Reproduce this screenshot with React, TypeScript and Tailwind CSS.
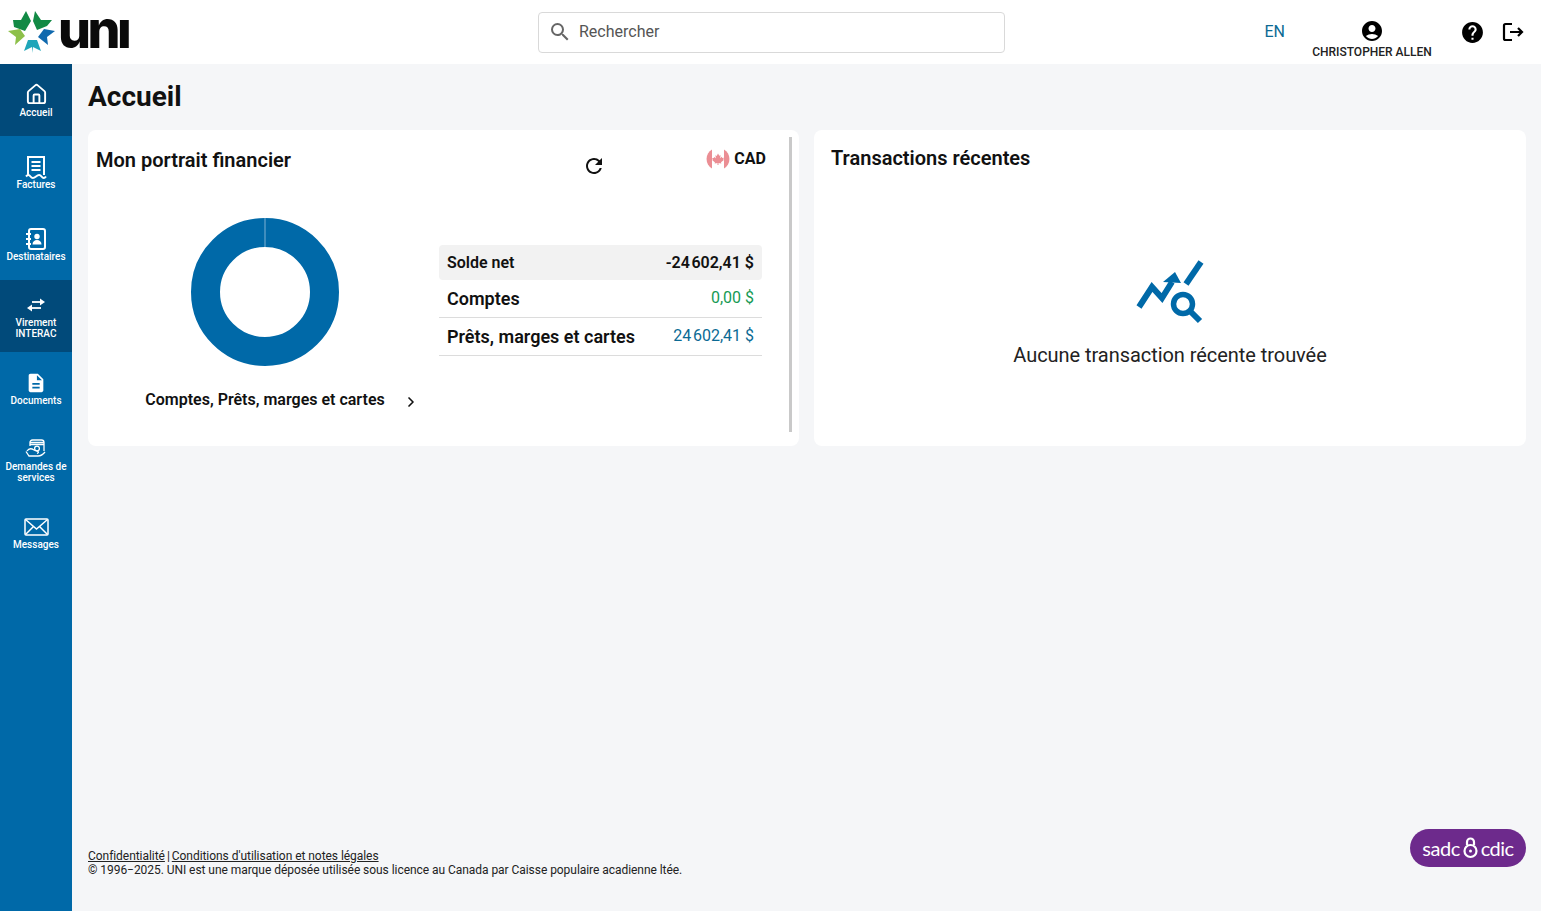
import { ChevronRight, House } from "lucide-react";
import { MdAccountCircle, MdDescription, MdHelp, MdRefresh, MdSearch } from "react-icons/md";
import type { ReactNode } from "react";

function FacturesIcon() {
  return (
    <svg width="22" height="24" viewBox="0 0 22 24" fill="none" stroke="white" strokeWidth="2">
      <path d="M3 20V2h16v18" />
      <path d="M1 21.500c1.700-2 3-2 4.500 0s3 2 5.500 0 4-2 5.500 0 3 2 4.500 0" strokeWidth="2" />
      <path d="M6.500 7h9M6.500 11h9M6.500 15h9" strokeWidth="1.800" />
    </svg>
  );
}

function DestinatairesIcon() {
  return (
    <svg width="22" height="24" viewBox="0 0 22 24" fill="none">
      <rect x="4" y="2" width="16" height="20" rx="2" stroke="white" strokeWidth="2" />
      <path d="M1 7h5M1 12h5M1 17h5" stroke="white" strokeWidth="1.800" />
      <circle cx="12" cy="9.500" r="2.700" fill="white" />
      <path d="M7.500 17.500c0-3 2-4.500 4.500-4.500s4.500 1.500 4.500 4.500z" fill="white" />
    </svg>
  );
}

function VirementIcon() {
  return (
    <svg width="20" height="16" viewBox="0 0 20 16" fill="none" stroke="white" strokeWidth="1.800">
      <path d="M6 5h10" />
      <path d="M14 1.500 19 5l-5 3.500z" fill="white" stroke="none" />
      <path d="M15 11H4" />
      <path d="M6 7.500 1 11l5 3.500z" fill="white" stroke="none" />
    </svg>
  );
}

function DemandesIcon() {
  return (
    <svg width="22" height="20" viewBox="0 0 22 20" fill="none" stroke="white" strokeWidth="1.300">
      <path d="M5 7V3.500C5 2 6 1 7.500 1h9C18 1 19 2 19 3.500V12" />
      <path d="M5 3.500h14M5 5.500h14" />
      <circle cx="12" cy="9.500" r="2.400" />
      <path d="M2 12c2-3 4-3 7-1l4 1.500c1 .7 0 2-1 1.700" />
      <path d="M1 12.500 4 17h9c3 0 5-1.500 7-4" />
    </svg>
  );
}

function MessagesIcon() {
  return (
    <svg width="25" height="18" viewBox="0 0 25 18" fill="none" stroke="white" strokeWidth="1.500">
      <rect x="1" y="1" width="23" height="16" rx="1" />
      <path d="m1.500 1.500 11 9.500 11-9.500M1.500 16.500l8-8M23.500 16.500l-8-8" />
    </svg>
  );
}

function LogoutIcon() {
  return (
    <svg width="22" height="20" viewBox="0 0 22 20" fill="none" stroke="#000" strokeWidth="2.200" className="ml-[17px]">
      <path d="M10 2H3.500A1.500 1.500 0 0 0 2 3.500v13A1.500 1.500 0 0 0 3.500 18H10" />
      <path d="M8 10h12M16 6l4 4-4 4" />
    </svg>
  );
}

function StarLogo() {
  return (
    <svg width="48" height="44" viewBox="8 10 48 44">
      <polygon points="26,11 31,21 25,31 14,27 13,20 21,20" fill="#128a45" />
      <polygon points="35,11 33,21 37,30 47,26 52,20 41,20" fill="#128a45" />
      <polygon points="55,31 44,29 38,37 48,45 47,37" fill="#1069ae" />
      <polygon points="8,31 20,29 25,36 15,45 16,37" fill="#8ec04a" />
      <polygon points="24,51 28,40 37,40 41,51 33,47 33,53 32,47" fill="#1fa6b9" />
    </svg>
  );
}

function CanadaFlag() {
  return (
    <svg width="24" height="24" viewBox="0 0 24 24" className="opacity-50">
      <path d="M6 2.500a11 11 0 0 0 0 19z" fill="#d8202c" />
      <path d="M18 2.500a11 11 0 0 1 0 19z" fill="#d8202c" />
      <path
        d="M12 6.500l1.300 2.300 1.300-.6-.5 3 1.700-1.400.5 1.200 1.500-.2-.5 1.800.6.400-2.900 2.300.3 1.100-2.800-.4V18h-1v-1.900l-2.800.4.300-1.100-2.900-2.300.6-.4-.5-1.800 1.500.2.500-1.200 1.700 1.400-.5-3 1.300.6z"
        fill="#d8202c"
      />
    </svg>
  );
}

function Donut() {
  return (
    <svg width="150" height="150" viewBox="0 0 150 150">
      <circle cx="75" cy="75" r="59.500" fill="none" stroke="#0069a8" strokeWidth="29" />
      <path d="M75 1v29" stroke="#7fb2d3" strokeWidth="1" />
    </svg>
  );
}

function NoDataIcon() {
  return (
    <svg width="68" height="64" viewBox="0 0 68 64" fill="none" stroke="#0069a8">
      <path d="M3 47 16 27l10 11 10-16" strokeWidth="6" />
      <path d="m39 12-12 10 18 1z" fill="#0069a8" stroke="none" />
      <path d="M50 24 65 2" strokeWidth="6" />
      <circle cx="47" cy="44" r="9.500" strokeWidth="5.500" />
      <path d="m54 51 10 10" strokeWidth="6" />
    </svg>
  );
}

const navItems: { label: ReactNode; icon: ReactNode; dark?: boolean }[] = [
  { label: "Accueil", icon: <House size={23} strokeWidth={2} color="white" />, dark: true },
  { label: "Factures", icon: <FacturesIcon /> },
  { label: "Destinataires", icon: <DestinatairesIcon /> },
  {
    label: (
      <>
        Virement
        <br />
        INTERAC
      </>
    ),
    icon: <VirementIcon />,
    dark: true,
  },
  { label: "Documents", icon: <MdDescription size={22} color="white" /> },
  {
    label: (
      <>
        Demandes de
        <br />
        services
      </>
    ),
    icon: <DemandesIcon />,
  },
  { label: "Messages", icon: <MessagesIcon /> },
];

export default function App() {
  return (
    <div className="flex h-[911px] flex-col overflow-hidden bg-[#f5f6f8] font-['Roboto',sans-serif] text-[#111]">
      <header className="flex h-[64px] shrink-0 items-center bg-white">
        <div className="flex w-[538px] shrink-0 items-center pl-2">
          <StarLogo />
          <span className="ml-[2px] -mt-[5px] pr-[4px] font-['Inter',sans-serif] text-[52px] leading-[60px] font-extrabold tracking-[-3.500px] text-[#0a0a0a]">
            unı
          </span>
        </div>
        <div className="flex h-[41px] w-[467px] items-center rounded border border-[#d9d9d9] pl-[9px]">
          <MdSearch size={24} color="#666" />
          <span className="ml-[7px] text-base text-[#555]">Rechercher</span>
        </div>
        <div className="ml-auto flex h-full items-center pr-[17px]">
          <span className="text-base text-[#0b6a94]">EN</span>
          <div className="ml-[27px] flex w-[120px] flex-col items-center self-start pt-[19px]">
            <MdAccountCircle size={24} color="#000" />
            <span className="text-xs leading-[18px] font-medium whitespace-nowrap text-[#222]">CHRISTOPHER ALLEN</span>
          </div>
          <MdHelp size={25} color="#000" className="ml-[28px]" />
          <LogoutIcon />
        </div>
      </header>
      <div className="flex min-h-0 flex-1">
        <nav className="flex w-[72px] shrink-0 flex-col bg-[#0069a8]">
          {navItems.map((item, i) => (
            <div
              key={i}
              className={`flex h-[72px] shrink-0 flex-col items-center justify-center ${item.dark ? "bg-[#014a7a]" : ""}`}
            >
              <div className="flex h-[24px] items-center justify-center">{item.icon}</div>
              <div className="text-center text-[10px] leading-[11px] font-medium whitespace-nowrap text-white">
                {item.label}
              </div>
            </div>
          ))}
        </nav>
        <main className="flex min-w-0 flex-1 flex-col pr-[15px] pb-[34px] pl-[16px]">
          <h1 className="mt-[15px] text-[28px] leading-[36px] font-bold text-[#111]">Accueil</h1>
          <div className="mt-[15px] flex gap-[15px]">
            <section className="relative h-[316px] w-[711px] rounded-lg bg-white px-2">
              <div className="flex h-[76px] items-start justify-between pt-[17px]">
                <h2 className="text-xl leading-[26px] font-semibold">Mon portrait financier</h2>
                <MdRefresh size={24} color="#111" className="mt-[7px] ml-[190px]" />
                <div className="mr-[25px] flex items-center gap-[4px] text-base leading-[24px] font-bold">
                  <CanadaFlag />
                  CAD
                </div>
              </div>
              <div className="flex">
                <div className="flex w-[338px] flex-col items-center pt-[11px]">
                  <Donut />
                  <div className="mt-[21px] flex items-center">
                    <span className="text-base font-semibold whitespace-nowrap">Comptes, Prêts, marges et cartes</span>
                  </div>
                </div>
                <div className="ml-[5px] w-[323px] pt-[39px]">
                  <div className="flex h-[35px] items-center justify-between rounded bg-[#f2f2f2] px-2 text-base font-semibold">
                    <span>Solde net</span>
                    <span>-24{"\u200a"}602,41 $</span>
                  </div>
                  <div className="flex h-[38px] items-center justify-between border-b border-[#dcdcdc] px-2">
                    <span className="text-lg font-semibold">Comptes</span>
                    <span className="-mt-[1px] text-base text-[#169a54]">0,00 $</span>
                  </div>
                  <div className="flex h-[38px] items-center justify-between border-b border-[#dcdcdc] px-2">
                    <span className="text-lg font-semibold">Prêts, marges et cartes</span>
                    <span className="-mt-[2px] text-base text-[#0b6a94]">24{"\u200a"}602,41 $</span>
                  </div>
                </div>
              </div>
              <ChevronRight size={16} color="#111" strokeWidth={2.500} className="absolute top-[264px] left-[315px]" />
              <div className="absolute top-[7px] left-[701px] h-[295px] w-[3px] bg-[#c9c9c9]" />
            </section>
            <section className="flex h-[316px] w-[712px] flex-col rounded-lg bg-white px-[17px]">
              <h2 className="mt-[15px] text-xl leading-[26px] font-semibold">Transactions récentes</h2>
              <div className="mt-[89px] flex flex-col items-center">
                <NoDataIcon />
                <p className="mt-[18px] text-xl leading-[26px] tracking-[-0.05px] text-[#222]">
                  Aucune transaction récente trouvée
                </p>
              </div>
            </section>
          </div>
          <footer className="mt-auto flex items-end justify-between">
            <div className="text-xs leading-[14px] tracking-[-0.05px] text-[#222]">
              <div>
                <span className="underline">Confidentialité</span>
                <span className="mx-[2px]">|</span>
                <span className="underline">Conditions d'utilisation et notes légales</span>
              </div>
              <div>© 1996−2025. UNI est une marque déposée utilisée sous licence au Canada par Caisse populaire acadienne ltée.</div>
            </div>
            <div className="mb-[10px] flex h-[38px] w-[116px] items-center justify-center rounded-full bg-[#6d2a8c] font-['Lato',sans-serif] text-[20px] leading-none tracking-[-0.5px] text-white">
              <span>sadc</span>
              <svg width="15" height="22" viewBox="0 0 15 22" fill="none" stroke="white" strokeWidth="2.200" className="mx-[3px]">
                <path d="M4 8V5a3.500 3.500 0 0 1 7 0v3" />
                <circle cx="7.500" cy="14" r="6" />
                <circle cx="7.500" cy="14" r="1.500" fill="white" stroke="none" />
              </svg>
              <span>cdic</span>
            </div>
          </footer>
        </main>
      </div>
    </div>
  );
}
